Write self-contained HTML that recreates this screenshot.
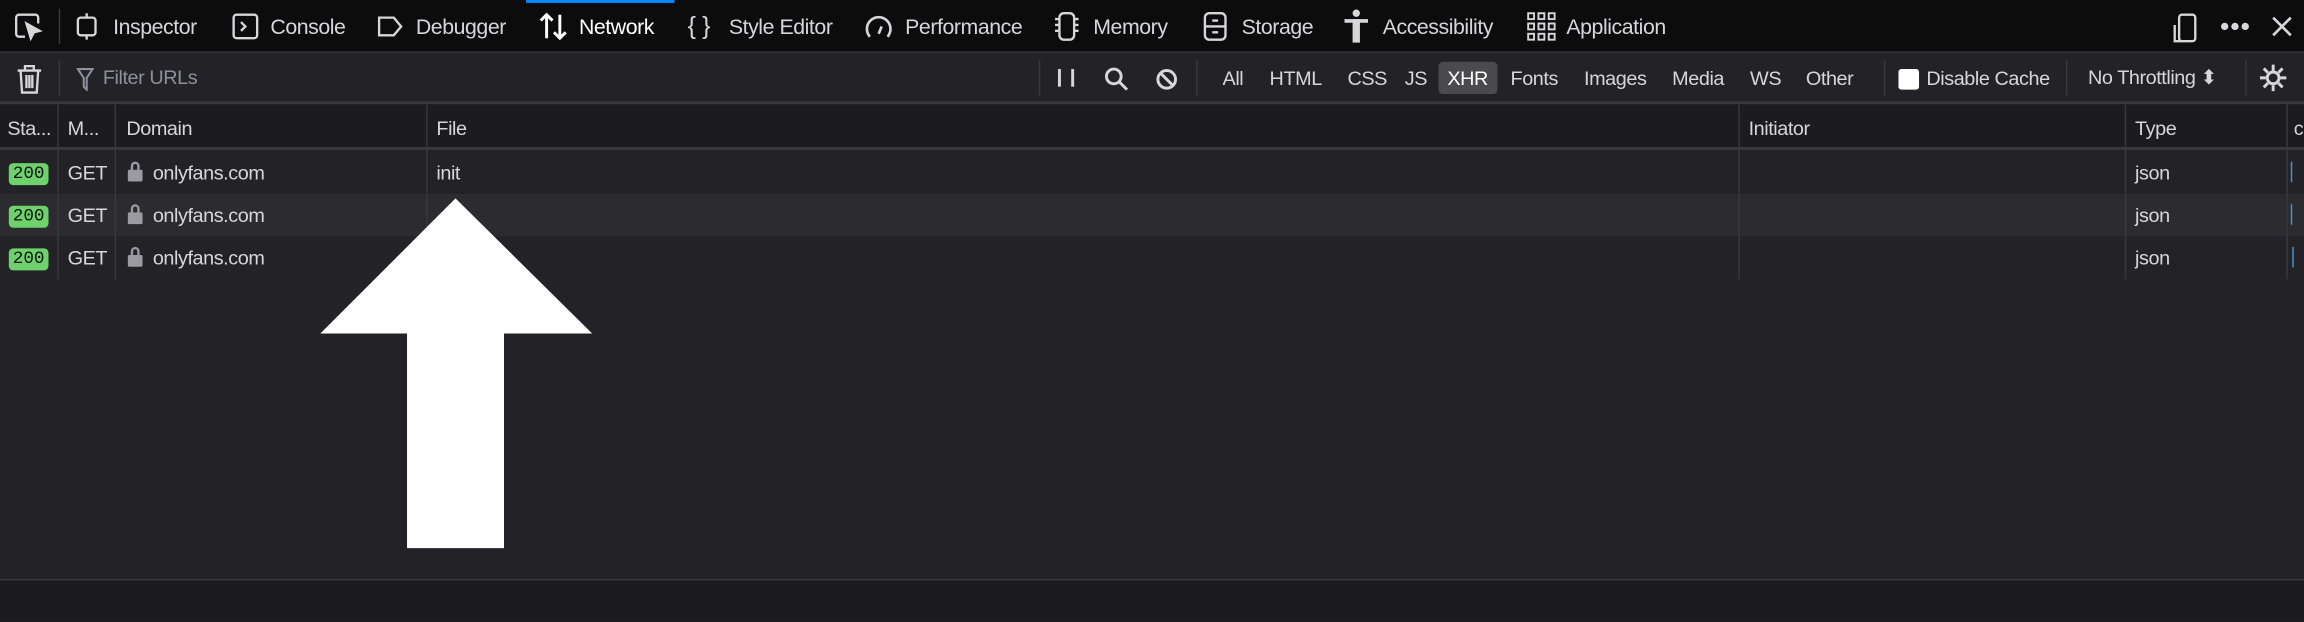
<!DOCTYPE html>
<html><head><meta charset="utf-8"><style>
*{margin:0;padding:0;box-sizing:border-box}
html,body{width:2304px;height:621px;overflow:hidden;background:#232327}
#s{position:absolute;left:0;top:0;width:1568px;height:423px;transform:scale(1.4694);transform-origin:0 0;font-family:"Liberation Sans",sans-serif;color:#d7d7db;font-size:13.5px;letter-spacing:-0.3px}
.a{position:absolute;white-space:nowrap}
#top{position:absolute;left:0;top:0;width:1568px;height:36px;background:#0c0c0d;border-bottom:1px solid #38383d}
#flt{position:absolute;left:0;top:36px;width:1568px;height:35px;background:#232327;border-bottom:2px solid #38383d}
#hdr{position:absolute;left:0;top:71px;width:1568px;height:31px;background:#1c1b1f;border-bottom:2px solid #38383d}
.row{position:absolute;left:0;width:1568px;height:29px}
.v{position:absolute;top:71px;width:1px;height:119px;background:#38383d}
.sep{position:absolute;width:1px;background:#38383d}
.tt{font-size:14.5px;color:#d7d7db;top:11px !important}
.badge{position:absolute;left:6px;width:27px;height:15px;background:#6dd26b;border-radius:3px;color:#111;font-family:"Liberation Mono",monospace;font-size:12px;text-align:center;line-height:15px;letter-spacing:0}
svg{position:absolute}
</style></head><body><div id="s">
<div id="top">
 <div class="a" style="left:358px;top:0;width:101px;height:2px;background:#0a84ff"></div>
 <svg style="left:9px;top:8px" width="20" height="20" viewBox="0 0 20 20" fill="none" stroke="#d7d7db" stroke-width="1.6"><path d="M8 17H4a2 2 0 0 1-2-2V4a2 2 0 0 1 2-2h11a2 2 0 0 1 2 2v4"/><path d="M9 8l3 10 2-4 4-1z" fill="#d7d7db"/></svg>
 <div class="sep" style="left:40px;top:6px;height:24px"></div>
 <svg style="left:50px;top:8px" width="18" height="20" viewBox="0 0 18 20" fill="none" stroke="#d7d7db" stroke-width="1.6"><rect x="3" y="4" width="12" height="12" rx="2"/><path d="M9 1v3M9 16v3"/></svg>
 <div class="a tt" style="left:77px;top:9px">Inspector</div>
 <svg style="left:157px;top:8px" width="20" height="20" viewBox="0 0 20 20" fill="none" stroke="#d7d7db" stroke-width="1.6"><rect x="2" y="2" width="16" height="16" rx="2"/><path d="M7 7l3 3-3 3"/></svg>
 <div class="a tt" style="left:184px;top:9px">Console</div>
 <svg style="left:255px;top:8px" width="20" height="20" viewBox="0 0 20 20" fill="none" stroke="#d7d7db" stroke-width="1.6"><path d="M3 4h10l5 6-5 6H3z"/></svg>
 <div class="a tt" style="left:283px;top:9px">Debugger</div>
 <svg style="left:366px;top:7px" width="22" height="22" viewBox="0 0 22 22" fill="none" stroke="#fff" stroke-width="2"><path d="M6 19V3M2 7l4-4 4 4M15 3v16M11 15l4 4 4-4"/></svg>
 <div class="a tt" style="left:394px;top:9px;color:#fff">Network</div>
 <div class="a tt" style="left:468px;font-size:17px;top:8px !important">{ }</div>
 <div class="a tt" style="left:496px;top:9px">Style Editor</div>
 <svg style="left:588px;top:7px" width="20" height="22" viewBox="0 0 20 22" fill="none" stroke="#d7d7db" stroke-width="1.8"><path d="M4 18A8 8 0 1 1 16 18"/><path d="M10 16l2-5"/></svg>
 <div class="a tt" style="left:616px;top:9px">Performance</div>
 <svg style="left:716px;top:7px" width="20" height="22" viewBox="0 0 20 22" fill="none" stroke="#d7d7db" stroke-width="1.6"><rect x="5" y="2" width="10" height="18" rx="3"/><path d="M2 6h3M2 10h3M2 14h3M15 6h3M15 10h3M15 14h3"/></svg>
 <div class="a tt" style="left:744px;top:9px">Memory</div>
 <svg style="left:818px;top:7px" width="18" height="22" viewBox="0 0 18 22" fill="none" stroke="#d7d7db" stroke-width="1.6"><rect x="2" y="2" width="14" height="18" rx="3"/><path d="M2 11h14M7 7h4M7 15h4"/></svg>
 <div class="a tt" style="left:845px;top:9px">Storage</div>
 <svg style="left:913px;top:6px" width="20" height="24" viewBox="0 0 20 24" fill="#d7d7db"><circle cx="10" cy="3" r="2.5"/><rect x="2" y="7" width="16" height="2.5"/><rect x="7.5" y="7" width="5" height="16"/></svg>
 <div class="a tt" style="left:941px;top:9px">Accessibility</div>
 <svg style="left:1039px;top:8px" width="20" height="20" viewBox="0 0 20 20" fill="none" stroke="#d7d7db" stroke-width="1.3"><rect x="1" y="1" width="4" height="4"/><rect x="8" y="1" width="4" height="4"/><rect x="15" y="1" width="4" height="4"/><rect x="1" y="8" width="4" height="4"/><rect x="8" y="8" width="4" height="4"/><rect x="15" y="8" width="4" height="4"/><rect x="1" y="15" width="4" height="4"/><rect x="8" y="15" width="4" height="4"/><rect x="15" y="15" width="4" height="4"/></svg>
 <div class="a tt" style="left:1066px;top:9px">Application</div>
 <svg style="left:1478px;top:8px" width="20" height="22" viewBox="0 0 20 22" fill="none" stroke="#d7d7db" stroke-width="1.6"><rect x="5" y="2" width="11" height="18" rx="2"/><path d="M2 9v11h5"/></svg>
 <svg style="left:1510px;top:14px" width="22" height="8" viewBox="0 0 22 8" fill="#d7d7db"><circle cx="4" cy="4" r="2.5"/><circle cx="11" cy="4" r="2.5"/><circle cx="18" cy="4" r="2.5"/></svg>
 <svg style="left:1545px;top:10px" width="16" height="16" viewBox="0 0 16 16" stroke="#d7d7db" stroke-width="1.8"><path d="M2 2l12 12M14 2L2 14"/></svg>
</div>
<div id="flt">
 <svg style="left:11px;top:7px" width="18" height="22" viewBox="0 0 18 22" fill="none" stroke="#d7d7db" stroke-width="1.6"><path d="M1 5h16M6 5V2h6v3M3 5l1 15h10l1-15M7 8v9M9 8v9M11 8v9"/></svg>
 <div class="sep" style="left:40px;top:5px;height:24px"></div>
 <svg style="left:52px;top:10px" width="12" height="16" viewBox="0 0 12 16" fill="none" stroke="#8f8f9d" stroke-width="1.4"><path d="M1 1h10L7 7v8L5 13V7z"/></svg>
 <div class="a" style="left:70px;top:9px;color:#8f8f9d">Filter URLs</div>
 <div class="sep" style="left:707px;top:5px;height:24px"></div>
 <div class="a" style="left:720px;top:11px;width:2px;height:12px;background:#d7d7db"></div>
 <div class="a" style="left:729px;top:11px;width:2px;height:12px;background:#d7d7db"></div>
 <svg style="left:751px;top:9px" width="18" height="18" viewBox="0 0 18 18" fill="none" stroke="#d7d7db" stroke-width="2"><circle cx="7" cy="7" r="5"/><path d="M11 11l5 5"/></svg>
 <svg style="left:786px;top:10px" width="16" height="16" viewBox="0 0 16 16" fill="none" stroke="#d7d7db" stroke-width="2"><circle cx="8" cy="8" r="6"/><path d="M4 4l8 8"/></svg>
 <div class="sep" style="left:814px;top:5px;height:24px"></div>
 <div class="a" style="left:979px;top:6px;width:40px;height:22px;background:#4a4a4f;border-radius:3px"></div>
 <div class="a" style="left:832px;top:10px">All</div>
 <div class="a" style="left:864px;top:10px">HTML</div>
 <div class="a" style="left:917px;top:10px">CSS</div>
 <div class="a" style="left:956px;top:10px">JS</div>
 <div class="a" style="left:985px;top:10px;color:#fff">XHR</div>
 <div class="a" style="left:1028px;top:10px">Fonts</div>
 <div class="a" style="left:1078px;top:10px">Images</div>
 <div class="a" style="left:1138px;top:10px">Media</div>
 <div class="a" style="left:1191px;top:10px">WS</div>
 <div class="a" style="left:1229px;top:10px">Other</div>
 <div class="sep" style="left:1282px;top:5px;height:24px"></div>
 <div class="a" style="left:1292px;top:11px;width:14px;height:14px;background:#fff;border-radius:2px"></div>
 <div class="a" style="left:1311px;top:10px">Disable Cache</div>
 <div class="sep" style="left:1406px;top:5px;height:24px"></div>
 <div class="a" style="left:1421px;top:9px">No Throttling ⬍</div>
 <div class="sep" style="left:1528px;top:5px;height:24px"></div>
 <svg style="left:1537px;top:7px" width="20" height="20" viewBox="0 0 20 20" fill="none" stroke="#d7d7db" stroke-width="2"><circle cx="10" cy="10" r="4"/><path d="M10 1v4M10 15v4M1 10h4M15 10h4M3.6 3.6l2.8 2.8M13.6 13.6l2.8 2.8M3.6 16.4l2.8-2.8M13.6 6.4l2.8-2.8"/></svg>
</div>
<div id="hdr">
 <div class="a" style="left:5px;top:9px">Sta...</div>
 <div class="a" style="left:46px;top:9px">M...</div>
 <div class="a" style="left:86px;top:9px">Domain</div>
 <div class="a" style="left:297px;top:9px">File</div>
 <div class="a" style="left:1190px;top:9px">Initiator</div>
 <div class="a" style="left:1453px;top:9px">Type</div>
 <div class="a" style="left:1561px;top:9px">c</div>
</div>
<div class="row" style="top:103px;background:#232327"></div>
<div class="row" style="top:132px;background:#2b2b30"></div>
<div class="row" style="top:161px;background:#232327"></div>
<div class="v" style="left:39px"></div><div class="v" style="left:78px"></div><div class="v" style="left:290px"></div><div class="v" style="left:1183px"></div><div class="v" style="left:1446px"></div><div class="v" style="left:1556px"></div>
<div class="badge" style="top:111px">200</div><div class="badge" style="top:140px">200</div><div class="badge" style="top:169px">200</div>
<div class="a" style="left:46px;top:110px">GET</div><div class="a" style="left:46px;top:139px">GET</div><div class="a" style="left:46px;top:168px">GET</div>
<svg style="left:86px;top:109px" width="12" height="15" viewBox="0 0 12 15" fill="#9a9aa0"><path d="M3 7V4a3 3 0 0 1 6 0v3h-1.6V4a1.4 1.4 0 0 0-2.8 0v3z"/><rect x="1" y="6.5" width="10" height="8" rx="1"/></svg>
<svg style="left:86px;top:138px" width="12" height="15" viewBox="0 0 12 15" fill="#9a9aa0"><path d="M3 7V4a3 3 0 0 1 6 0v3h-1.6V4a1.4 1.4 0 0 0-2.8 0v3z"/><rect x="1" y="6.5" width="10" height="8" rx="1"/></svg>
<svg style="left:86px;top:167px" width="12" height="15" viewBox="0 0 12 15" fill="#9a9aa0"><path d="M3 7V4a3 3 0 0 1 6 0v3h-1.6V4a1.4 1.4 0 0 0-2.8 0v3z"/><rect x="1" y="6.5" width="10" height="8" rx="1"/></svg>
<div class="a" style="left:104px;top:110px">onlyfans.com</div><div class="a" style="left:104px;top:139px">onlyfans.com</div><div class="a" style="left:104px;top:168px">onlyfans.com</div>
<div class="a" style="left:297px;top:110px">init</div>
<div class="a" style="left:1453px;top:110px">json</div><div class="a" style="left:1453px;top:139px">json</div><div class="a" style="left:1453px;top:168px">json</div>
<div class="a" style="left:1559px;top:110px;width:1px;height:14px;background:#4a90d9"></div>
<div class="a" style="left:1559px;top:139px;width:1px;height:14px;background:#4a90d9"></div>
<div class="a" style="left:1560px;top:168px;width:1px;height:14px;background:#4a90d9"></div>
<svg style="left:0;top:0" width="1568" height="423"><polygon points="310,135 403,227 343,227 343,373 277,373 277,227 218,227" fill="#fff"/></svg>
<div class="a" style="left:0;top:394px;width:1568px;height:29px;background:#1c1b1f;border-top:1px solid #38383d"></div>
</div></body></html>
